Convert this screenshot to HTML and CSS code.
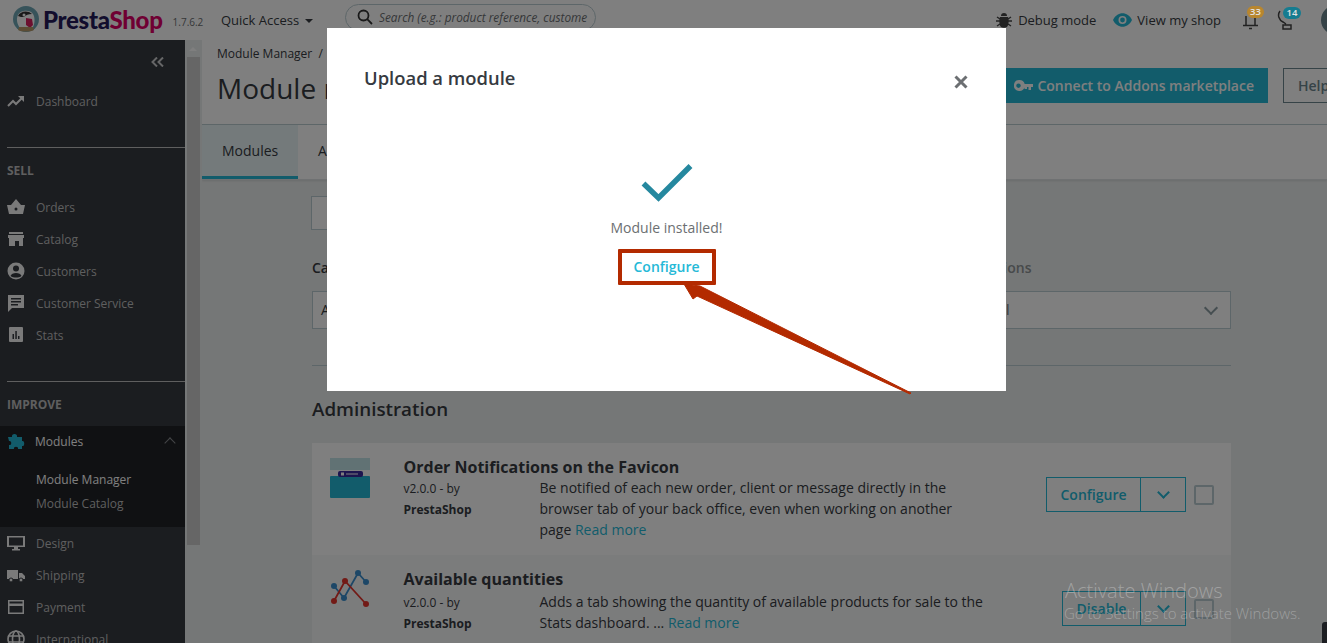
FILE: index.html
```html
<!DOCTYPE html>
<html lang="en">
<head>
<meta charset="utf-8">
<title>Module manager</title>
<link rel="stylesheet" href="styles.css">
</head>
<body>
<div class="page">
  <header class="topbar">
    <div class="logo">
      <svg class="bird" width="34" height="28" viewBox="0 0 34 28"><circle cx="17" cy="14" r="13" fill="#6fa7b5"/><path d="M9 10c2-5 12-6 15-1 2 3 2 9 0 13-2 3-10 4-13 1-3-4-4-9-2-13z" fill="#fff"/><path d="M9 11c2-5 10-6 14-2-4 0-6 1-8 3-2 0-4 0-6-1z" fill="#333"/><path d="M17 13l6 1 1 6-3 3-4-3z" fill="#d8215f"/><circle cx="15" cy="10" r="1.500" fill="#fff"/><path d="M9 25c4 2 12 2 16 0l-1-3H10z" fill="#b89a6a"/></svg>
      <span class="brand"><span class="presta">Presta</span><span class="shop">Shop</span></span>
      <span class="version">1.7.6.2</span>
    </div>
    <div class="quick">Quick Access <span class="caret"></span></div>
    <div class="search">
      <svg width="16" height="16" viewBox="0 0 16 16" fill="none" stroke="#333" stroke-width="1.800"><circle cx="6.500" cy="6.500" r="5"/><path d="M10.200 10.200l4.800 4.800"/></svg>
      <span class="search-text">Search (e.g.: product reference, custome</span>
    </div>
    <div class="top-right">
      <span class="top-link">
        <svg width="16" height="16" viewBox="0 0 16 16" fill="#444"><path d="M5 4a3 3 0 0 1 6 0zM4 5h8c1 2 1 8-1 10-1 1-5 1-6 0-2-2-2-8-1-10z"/><path d="M1 5l3 2M15 5l-3 2M0 9h4M12 9h4M1 14l3-2M15 14l-3-2" stroke="#444" stroke-width="1.400"/></svg>
        Debug mode</span>
      <span class="top-link">
        <svg width="19" height="14" viewBox="0 0 19 14"><path d="M0 7c4-9 15-9 19 0-4 9-15 9-19 0z" fill="#25b9d7"/><circle cx="9.500" cy="7" r="4" fill="#fff"/><circle cx="9.500" cy="7" r="2.400" fill="#25b9d7"/></svg>
        View my shop</span>
      <span class="notif bell">
        <svg width="15" height="20" viewBox="0 0 15 20" fill="none" stroke="#444" stroke-width="1.500"><path d="M0 15.500h15M3 15V6M12 15V6M6 18.500h3"/></svg>
        <span class="badge badge-orange">33</span>
      </span>
      <span class="notif tray">
        <svg width="15" height="20" viewBox="0 0 15 20" fill="none" stroke="#444" stroke-width="1.500"><path d="M3 1C0 5 2 10 6 12l3 2M6 15h8v4H6z"/></svg>
        <span class="badge badge-blue">14</span>
      </span>
      <span class="avatar"></span>
    </div>
  </header>

  <div class="body">
    <nav class="sidebar">
      <div class="collapse"><svg width="13" height="10" viewBox="0 0 13 10" fill="none" stroke="#fff" stroke-width="2"><path d="M6 0.500L1.500 5 6 9.500M12 0.500L7.500 5 12 9.500"/></svg></div>
      <a class="nav-item dash">
        <svg class="ico" viewBox="0 0 18 18"><path d="M1 14l5-5 3 3 6-6" fill="none" stroke="#fff" stroke-width="2"/><path d="M11 4h6v6z" fill="#fff"/></svg>
        Dashboard</a>
      <div class="sect first">SELL</div>
      <a class="nav-item"><svg class="ico" viewBox="0 0 18 18"><path d="M0 7h18l-2 9H2zM4 7l5-6 5 6" fill="#fff"/><circle cx="9" cy="11" r="1.500" fill="#363a41"/></svg>Orders</a>
      <a class="nav-item"><svg class="ico" viewBox="0 0 18 18"><path d="M2 2h14v2H2zM1 5h16v3H1zM2 8h14v8h-4v-5H8v5H2z" fill="#fff"/></svg>Catalog</a>
      <a class="nav-item"><svg class="ico" viewBox="0 0 18 18"><circle cx="9" cy="9" r="8.500" fill="#fff"/><circle cx="9" cy="6.500" r="3" fill="#363a41"/><path d="M3.500 14c1-4 10-4 11 0-3 2-8 2-11 0z" fill="#363a41"/></svg>Customers</a>
      <a class="nav-item"><svg class="ico" viewBox="0 0 18 18"><path d="M1 1h16v13H5l-4 4z" fill="#fff"/><path d="M4 4h10v1.500H4zM4 7h10v1.500H4zM4 10h7v1.500H4z" fill="#363a41"/></svg>Customer Service</a>
      <a class="nav-item"><svg class="ico" viewBox="0 0 18 18"><rect x="2" y="1" width="14" height="15" rx="1" fill="#fff"/><path d="M5.500 8h1.500v5H5.500zM8.300 5h1.500v8H8.300zM11 10h1.500v3H11z" fill="#363a41"/></svg>Stats</a>
      <div class="sect">IMPROVE</div>
      <div class="group">
        <a class="nav-item open"><svg class="ico" viewBox="0 0 18 18"><path d="M1 5h4c-1-4 6-4 5 0h5v4c3-1 3 6 0 5v3h-4c1-3-5-3-4 0H2v-4c3 1 3-5 0-4z" fill="#25b9d7"/></svg>Modules<span class="chev-up"></span></a>
        <a class="sub current">Module Manager</a>
        <a class="sub">Module Catalog</a>
      </div>
      <a class="nav-item"><svg class="ico" viewBox="0 0 18 18"><path fill-rule="evenodd" d="M0 2h18v11H11v2h2v1.500H5V15h2v-2H0zM2 3.500v8h14v-8z" fill="#fff"/></svg>Design</a>
      <a class="nav-item"><svg class="ico" viewBox="0 0 18 18"><path d="M0 4h11v9H0zM12 7h3l3 3v3h-6z" fill="#fff"/><circle cx="4" cy="14" r="2" fill="#fff" stroke="#363a41"/><circle cx="14" cy="14" r="2" fill="#fff" stroke="#363a41"/></svg>Shipping</a>
      <a class="nav-item"><svg class="ico" viewBox="0 0 18 18"><path fill-rule="evenodd" d="M1 2h16v14H1zM2.500 3.500v2h13v-2zM2.500 8v6.500h13V8z" fill="#fff"/></svg>Payment</a>
      <a class="nav-item"><svg class="ico" viewBox="0 0 18 18" fill="none" stroke="#fff" stroke-width="1.600"><circle cx="9" cy="9" r="8"/><ellipse cx="9" cy="9" rx="3.500" ry="8"/><path d="M1 6h16M1 12h16"/></svg>International</a>
    </nav>
    <div class="scrollbar"><span class="arrow"></span><span class="thumb"></span></div>

    <main class="main">
      <div class="page-head">
        <div class="crumb">Module Manager&nbsp; /</div>
        <div class="head-row">
          <h1>Module manager</h1>
          <div class="head-actions">
            <a class="btn-connect">
              <svg width="19" height="12" viewBox="0 0 19 12"><path fill-rule="evenodd" d="M5.500 0a5.500 5.500 0 0 1 5.200 4H19v3h-2v3h-2.500V7H13v2h-2.500V7.600A5.500 5.500 0 1 1 5.500 0zM4.500 3.500a2.200 2.200 0 1 0 .01 0z" fill="#fff"/></svg>
              Connect to Addons marketplace</a>
            <a class="btn-help">Help</a>
          </div>
        </div>
      </div>
      <div class="tabs">
        <a class="tab active">Modules</a>
        <a class="tab">Alerts</a>
      </div>
      <div class="content">
        <div class="search-box"></div>
        <div class="filters">
          <div class="filter"><label>Category</label><div class="select">All</div></div>
          <div class="filter"><label class="muted">Bulk actions</label><div class="select bulk">Uninstall<span class="chev-down"></span></div></div>
        </div>
        <hr class="rule">
        <h2>Administration</h2>
        <div class="card">
          <svg class="mod-ico" viewBox="0 0 40 40"><rect y="0" width="40" height="12" fill="#c3e4e8"/><rect y="18" width="40" height="22" rx="1" fill="#25b9d7"/><rect x="8" y="13" width="25" height="6" rx="2" fill="#3b2a9e"/><rect x="11" y="14.500" width="3" height="3" fill="#fff"/><rect x="16" y="15.500" width="12" height="1" fill="#fff"/></svg>
          <div class="mod-name">
            <div class="mod-title">Order Notifications on the Favicon</div>
            <div class="mod-ver">v2.0.0 - by<br><b>PrestaShop</b></div>
          </div>
          <div class="mod-desc">Be notified of each new order, client or message directly in the browser tab of your back office, even when working on another page <a class="more">Read more</a></div>
          <div class="actions">
            <div class="split"><span class="split-main wide">Configure</span><span class="split-chev"><span class="chev-btn"></span></span></div>
            <span class="check"></span>
          </div>
        </div>
        <div class="card alt">
          <svg class="mod-ico" viewBox="0 0 40 40" fill="none"><path d="M4 16l10 12L28 3l8 9" stroke="#3a8fcf" stroke-width="1.800"/><path d="M4 31L15 11l21 23" stroke="#e5352c" stroke-width="1.800"/><g fill="#3a8fcf"><circle cx="4" cy="16" r="3"/><circle cx="14" cy="28" r="3"/><circle cx="28" cy="3" r="3"/><circle cx="36" cy="12" r="3"/></g><g fill="#e5352c"><circle cx="4" cy="31" r="3"/><circle cx="15" cy="11" r="3"/><circle cx="36" cy="34" r="3"/></g></svg>
          <div class="mod-name">
            <div class="mod-title">Available quantities</div>
            <div class="mod-ver">v2.0.0 - by<br><b>PrestaShop</b></div>
          </div>
          <div class="mod-desc">Adds a tab showing the quantity of available products for sale to the Stats dashboard. ... <a class="more">Read more</a></div>
          <div class="actions">
            <div class="split"><span class="split-main narrow">Disable</span><span class="split-chev"><span class="chev-btn"></span></span></div>
            <span class="check"></span>
          </div>
        </div>
      </div>
    </main>
  </div>
</div>

<div class="backdrop"></div>

<section class="modal">
  <div class="modal-head">
    <h3>Upload a module</h3>
    <svg class="close" width="14" height="14" viewBox="0 0 14 14"><path d="M1.500 1.500l11 11M12.500 1.500l-11 11" stroke="#6c6f72" stroke-width="3"/></svg>
  </div>
  <div class="modal-body">
    <svg class="tick" width="52" height="40" viewBox="0 0 52 40"><path d="M2.500 20.500L17.500 35 49.500 3" fill="none" stroke="#25889f" stroke-width="5.500"/></svg>
    <p>Module installed!</p>
    <a class="configure">Configure</a>
  </div>
</section>

<svg class="annot" width="236" height="118" viewBox="0 0 236 118"><path d="M4 4L20 6 231 113 230 114 17 16 13 19z" fill="#b32a00" stroke="#b32a00" stroke-linejoin="round"/></svg>

<div class="activate">
  <div class="a1">Activate Windows</div>
  <div class="a2">Go to Settings to activate Windows.</div>
</div>
<span class="corner"></span>
</body>
</html>
```

FILE: styles.css
```css
* { box-sizing: border-box; }
html, body { margin: 0; height: 643px; overflow: hidden; }
body { font-family: "Open Sans", sans-serif; font-size: 13px; color: #363a41; background: #ebeeee; position: relative; }
a { color: inherit; text-decoration: none; }
.page { display: flex; flex-direction: column; height: 643px; }

.topbar { height: 40px; background: #fff; display: flex; align-items: center; flex: none; }
.logo { display: flex; align-items: center; width: 221px; padding-left: 9px; flex: none; }
.bird { margin-top: -2px; }
.brand { font-family: "Lato", sans-serif; font-weight: 900; font-size: 24px; letter-spacing: -.3px; line-height: 30px; }
.presta { color: #251b5b; }
.shop { color: #df0067; }
.version { font-size: 10px; margin-left: 10px; margin-top: 4px; color: #6c6f72; }
.quick { font-size: 13px; width: 124px; flex: none; color: #363a41; }
.caret { display: inline-block; width: 0; height: 0; border: 4px solid transparent; border-top: 4px solid #363a41; border-bottom: 0; margin-left: 2px; vertical-align: 2px; }
.search { width: 251px; height: 27px; border: 1px solid #bbcdd2; border-radius: 14px; margin-top: -6px; display: flex; align-items: center; padding-left: 11px; gap: 6px; overflow: hidden; flex: none; }
.search-text { font-style: italic; font-size: 11.8px; color: #6c6f72; white-space: nowrap; width: 209px; overflow: hidden; }
.top-right { display: flex; align-items: center; margin-left: auto; margin-right: -24px; height: 40px; }
.top-link { display: flex; align-items: center; gap: 6px; margin-right: 17px; font-size: 13px; color: #363a41; }
.top-link:nth-child(2) { margin-right: 22px; gap: 5px; }
.notif { position: relative; display: block; height: 20px; }
.bell { width: 34px; }
.tray { width: 44px; }
.badge { position: absolute; height: 12px; border-radius: 7px; color: #e2e2e2; font-size: 9.5px; line-height: 12px; text-align: center; font-weight: 600; z-index: 1; }
.badge-orange { background: #b8862e; left: 4px; top: -4px; width: 17px; }
.badge-blue { background: #167c90; left: 6px; top: -3px; width: 18px; }
.avatar { display: block; width: 30px; height: 30px; border-radius: 50%; background: #6c868e; }

.body { display: flex; flex: 1; min-height: 0; }
.sidebar { width: 185px; flex: none; background: #363a41; overflow: hidden; color: #bebebe; }
.collapse { height: 40px; padding-top: 17px; padding-right: 21px; display: flex; justify-content: flex-end; align-items: flex-start; }
.collapse svg { opacity: .75; }
.nav-item { display: flex; align-items: center; height: 32px; padding-left: 7px; font-size: 12px; color: #bebebe; position: relative; white-space: nowrap; }
.dash { height: 42px; margin-bottom: 25px; }
.ico { width: 18px; height: 18px; margin-right: 11px; flex: none; opacity: .95; }
.sect { margin: 30px 0 0 7px; border-top: 1px solid #bebebe; padding-top: 14px; height: 45px; font-size: 12px; font-weight: 700; color: #bebebe; }
.sect.first { margin-top: 0; height: 44px; }
.group { background: #202226; padding-bottom: 11px; }
.group .nav-item { color: #fff; height: 30px; }
.group .ico { opacity: 1; margin-right: 10px; }
.chev-up { position: absolute; right: 11px; top: 13px; width: 8px; height: 8px; border-left: 1.500px solid #8a8d91; border-top: 1.500px solid #8a8d91; transform: rotate(45deg); }
.sub { display: block; height: 24px; padding-left: 36px; line-height: 24px; font-size: 12px; color: #bebebe; }
.group .nav-item + .sub { margin-top: 12px; }
.current { color: #fff; }

.scrollbar { width: 17px; flex: none; position: relative; padding-top: 17px; }
.scrollbar .arrow { position: absolute; left: 4px; top: 7px; border: 4px solid transparent; border-bottom: 4px solid #fff; border-top: 0; }
.thumb { display: block; margin-left: 2px; width: 13px; height: 488px; background: #cdcdcd; }

.main { flex: 1; min-width: 0; overflow: hidden; }
.page-head { height: 85px; background: #fff; border-bottom: 1px solid #bbcdd2; padding: 6px 0 0 15px; }
.crumb { font-size: 12px; line-height: 16px; color: #363a41; }
.head-row { display: flex; justify-content: space-between; margin-top: 7px; }
h1 { margin: 0; font-size: 28px; font-weight: 400; line-height: 38px; color: #363a41; white-space: nowrap; }
.head-actions { display: flex; gap: 15px; margin-right: -16px; margin-top: -1px; }
.btn-connect { display: flex; align-items: center; gap: 4px; height: 35px; padding: 0 14px; background: #25b9d7; color: #fff; font-size: 14px; font-weight: 600; white-space: nowrap; }
.btn-help { display: block; height: 35px; width: 60px; padding-left: 14px; border: 1px solid #6c868e; line-height: 33px; font-size: 14px; font-weight: 600; color: #6c868e; }

.tabs { height: 55px; background: #fff; border-bottom: 1px solid #dfe3e4; display: flex; box-shadow: 0 1px 2px rgba(0,0,0,.1); }
.tab { display: block; padding: 0 20px; line-height: 52px; font-size: 14px; color: #363a41; }
.tab.active { width: 96px; background: #e8f4f6; border-bottom: 3px solid #25b9d7; }

.content { padding: 16px 96px 0 110px; }
.search-box { height: 34px; width: 300px; margin-left: -1px; border: 1px solid #bbcdd2; background: #fff; }
.filters { display: flex; justify-content: space-between; margin-top: 28px; }
.filter label { display: block; font-size: 14px; font-weight: 600; line-height: 20px; margin-bottom: 13px; }
.filter label.muted { color: #8f9496; margin-left: 6px; }
.select { width: 300px; height: 38px; border: 1px solid #bbcdd2; background: #fff; padding-left: 8px; line-height: 36px; font-size: 14px; position: relative; color: #363a41; }
.bulk { width: 288px; color: #6c6f72; }
.chev-down { position: absolute; right: 14px; top: 11px; width: 10px; height: 10px; border-right: 2px solid #8c9da3; border-bottom: 2px solid #8c9da3; transform: rotate(45deg); }
.rule { border: 0; border-top: 1px solid #bbcdd2; margin: 36px 0 0; height: 0; }
h2 { margin: 31px 0 21px; font-size: 18.800px; line-height: 25px; font-weight: 600; color: #363a41; }
.card { display: flex; background: #fff; height: 112px; position: relative; }
.card.alt { background: #f6f8f9; }
.mod-ico { width: 40px; height: 40px; flex: none; margin: 15px 0 0 18px; }
.mod-name { flex: none; width: 136px; padding-top: 13px; margin-left: 33.500px; }
.mod-title { font-size: 16px; line-height: 22px; font-weight: 700; white-space: nowrap; color: #363a41; }
.mod-ver { font-size: 12px; line-height: 21px; color: #363a41; }
.alt .mod-ver { margin-top: 2px; }
.mod-ver b { font-weight: 700; }
.mod-desc { width: 446px; margin-top: 34px; font-size: 14px; line-height: 21px; color: #363a41; }
.alt .mod-desc { margin-top: 36px; }
.more { color: #25b9d7; }
.actions { position: absolute; right: 17px; top: 34px; display: flex; gap: 8px; align-items: center; }
.alt .actions { top: 36px; }
.split { display: flex; height: 35px; border: 1px solid #25b9d7; color: #25b9d7; font-weight: 600; font-size: 14px; }
.split-main { display: block; line-height: 33px; border-right: 1px solid #25b9d7; text-align: center; }
.split-main.wide { width: 94px; }
.split-main.narrow { width: 78px; }
.split-chev { display: block; width: 44px; position: relative; }
.chev-btn { position: absolute; left: 18px; top: 10px; width: 9px; height: 9px; border-right: 2px solid #25b9d7; border-bottom: 2px solid #25b9d7; transform: rotate(45deg); }
.check { display: block; width: 20px; height: 20px; border: 2px solid #bbcdd2; border-radius: 2px; }

.backdrop { position: absolute; inset: 0; background: rgba(0,0,0,.5); }

.modal { position: absolute; left: 327px; top: 28px; width: 679px; height: 363px; background: #fff; }
.modal-head { display: flex; justify-content: space-between; padding: 37px 38px 0 37px; height: 135px; }
h3 { margin: 0; font-size: 18.400px; line-height: 25px; font-weight: 600; color: #363a41; }
.close { margin-top: 10px; }
.modal-body { display: flex; flex-direction: column; align-items: center; }
.tick { margin-left: 1px; margin-bottom: 15px; }
.modal-body p { margin: 0; font-size: 14px; line-height: 20px; color: #6c6f72; }
.configure { display: block; width: 98px; height: 36px; margin-top: 11px; border: 4px solid #b32a00; border-radius: 1px; font-size: 14px; line-height: 27px; font-weight: 600; text-align: center; color: #25b9d7; }

.annot { position: absolute; left: 680px; top: 280px; }

.activate { position: absolute; left: 1065px; top: 578px; color: rgba(255,255,255,.3); }
.a1 { font-size: 20.100px; font-weight: 300; line-height: 26px; white-space: nowrap; }
.a2 { font-size: 15px; line-height: 18px; margin-left: -1px; white-space: nowrap; font-weight: 300; }
.corner { position: absolute; right: 0; top: 622px; width: 5px; height: 21px; background: #1c1e22; border-radius: 3px 0 0 0; }
```
